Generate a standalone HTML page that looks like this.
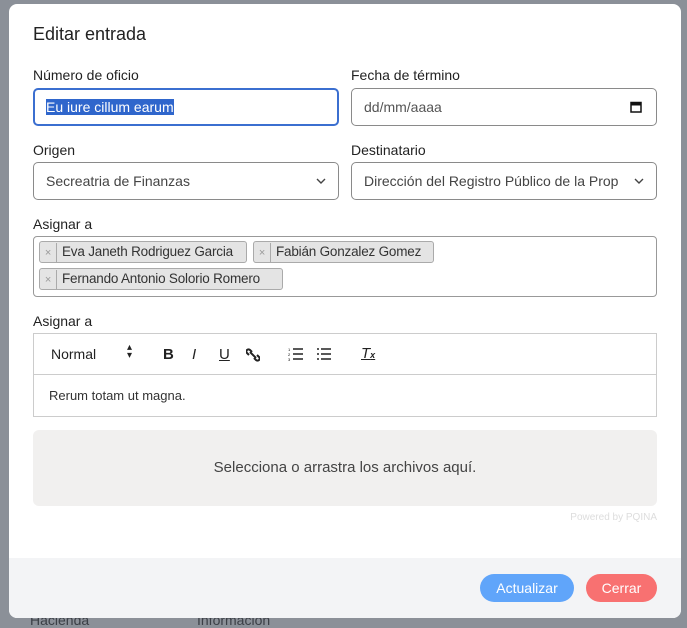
<!DOCTYPE html>
<html><head><meta charset="utf-8"><style>
*{box-sizing:border-box;margin:0;padding:0}
body{width:687px;height:626px;background:#8b9098;font-family:"Liberation Sans",sans-serif;position:relative;overflow:hidden;color:#1f2937}
.bgt{position:absolute;color:#3b3f46;font-size:14px}
.modal{position:absolute;left:9px;top:4px;width:672px;height:614px;background:#fff;border-radius:8px;overflow:hidden}
.a{position:absolute}
.lbl{font-size:14px;color:#222}
.inp{position:absolute;border:1px solid #8a8a8a;border-radius:5px;height:38px;font-size:14px;color:#444;padding-left:12px;line-height:36px}
.tag{position:absolute;height:22px;border:1px solid #aaa;border-radius:3px;background:#e4e4e4;font-size:13.5px;color:#333;line-height:20px;white-space:nowrap;overflow:hidden;letter-spacing:-0.2px}
.tag span{display:inline-block;width:17px;text-align:center;color:#999;font-size:11px;border-right:1px solid #aaa;margin-right:5px}
.tb{position:absolute;font-size:14px;color:#222}
.foot{position:absolute;left:0;top:554px;width:672px;height:60px;background:#f3f4f6}
.btn{position:absolute;top:570px;height:28px;border-radius:14px;color:#fff;font-size:14px;line-height:28px;text-align:center}
</style></head><body>
<div class="bgt" style="left:30px;top:612px">Hacienda</div>
<div class="bgt" style="left:197px;top:612px">Información</div>
<div class="modal">
<div class="a" style="left:24px;top:20px;font-size:18px;color:#222">Editar entrada</div>
<div class="a lbl" style="left:24px;top:63px">Número de oficio</div>
<div class="a lbl" style="left:342px;top:63px">Fecha de término</div>
<div class="inp" style="left:24px;top:84px;width:306px;border:2px solid #3b6fd0;padding-left:11px;line-height:34px"><span style="background:#2f66cc;color:#fff">Eu iure cillum earum</span></div>
<div class="inp" style="left:342px;top:84px;width:306px;color:#555">dd/mm/aaaa
<svg style="position:absolute;right:14px;top:12px" width="12" height="12" viewBox="0 0 12 12"><rect x="1" y="1.5" width="10" height="9.5" fill="none" stroke="#111" stroke-width="1.5"/><rect x="1" y="1.5" width="10" height="3" fill="#111"/></svg></div>
<div class="a lbl" style="left:24px;top:138px">Origen</div>
<div class="a lbl" style="left:342px;top:138px">Destinatario</div>
<div class="inp" style="left:24px;top:158px;width:306px">Secreatria de Finanzas<svg style="position:absolute;right:12px;top:15px" width="10" height="7" viewBox="0 0 10 7"><path d="M1 1l4 4 4-4" fill="none" stroke="#444" stroke-width="1.4"/></svg></div>
<div class="inp" style="left:342px;top:158px;width:306px;white-space:nowrap;overflow:hidden">Dirección del Registro Público de la Prop<svg style="position:absolute;right:12px;top:15px" width="10" height="7" viewBox="0 0 10 7"><path d="M1 1l4 4 4-4" fill="none" stroke="#444" stroke-width="1.4"/></svg></div>
<div class="a lbl" style="left:24px;top:212px">Asignar a</div>
<div class="a" style="left:24px;top:232px;width:624px;height:61px;border:1px solid #999;border-radius:4px"></div>
<div class="tag" style="left:30px;top:237px;width:208px"><span>×</span>Eva Janeth Rodriguez Garcia</div>
<div class="tag" style="left:244px;top:237px;width:181px"><span>×</span>Fabián Gonzalez Gomez</div>
<div class="tag" style="left:30px;top:264px;width:244px"><span>×</span>Fernando Antonio Solorio Romero</div>
<div class="a lbl" style="left:24px;top:309px">Asignar a</div>
<div class="a" style="left:24px;top:329px;width:624px;height:84px;border:1px solid #ccc"></div>
<div class="a" style="left:24px;top:370px;width:624px;height:1px;background:#ccc"></div>
<div class="tb" style="left:42px;top:342px">Normal</div>
<div class="tb" style="left:118px;top:340px;font-size:10px;line-height:8px">▴<br>▾</div>
<div class="tb" style="left:154px;top:342px;font-weight:bold;font-size:15px">B</div>
<div class="tb" style="left:183px;top:342px;font-style:italic;font-size:15px">I</div>
<div class="tb" style="left:210px;top:342px;text-decoration:underline;font-size:15px">U</div>
<svg class="a" style="left:237px;top:344px" width="14" height="14" viewBox="0 0 14 14"><path d="M6 4l-2-2a2 2 0 0 0-3 3l2 2M8 10l2 2a2 2 0 0 0 3-3l-2-2M4 4l6 6" fill="none" stroke="#222" stroke-width="2"/></svg>
<svg class="a" style="left:279px;top:343px" width="16" height="14" viewBox="0 0 16 14"><path d="M5 2h10M5 7h10M5 12h10" stroke="#222" stroke-width="1.5"/><text x="0" y="4" font-size="4">1</text><text x="0" y="9" font-size="4">2</text><text x="0" y="14" font-size="4">3</text></svg>
<svg class="a" style="left:307px;top:343px" width="16" height="14" viewBox="0 0 16 14"><path d="M5 2h10M5 7h10M5 12h10" stroke="#222" stroke-width="1.5"/><path d="M1 2h2M1 7h2M1 12h2" stroke="#222" stroke-width="1.5"/></svg>
<div class="tb" style="left:352px;top:341px;font-style:italic;text-decoration:underline;font-size:15px">T<span style="font-size:9px;font-weight:bold">x</span></div>
<div class="a" style="left:40px;top:384px;font-size:13px;color:#333">Rerum totam ut magna.</div>
<div class="a" style="left:24px;top:426px;width:624px;height:76px;background:#f1f0ef;border-radius:6px;text-align:center;line-height:76px;font-size:15px;color:#444">Selecciona o arrastra los archivos aquí.</div>
<div class="a" style="right:24px;top:508px;font-size:10px;color:#ddd">Powered by PQINA</div>
<div class="foot"></div>
<div class="btn" style="left:471px;width:94px;background:#60a5fa">Actualizar</div>
<div class="btn" style="left:577px;width:71px;background:#f87171">Cerrar</div>
</div>
</body></html>
